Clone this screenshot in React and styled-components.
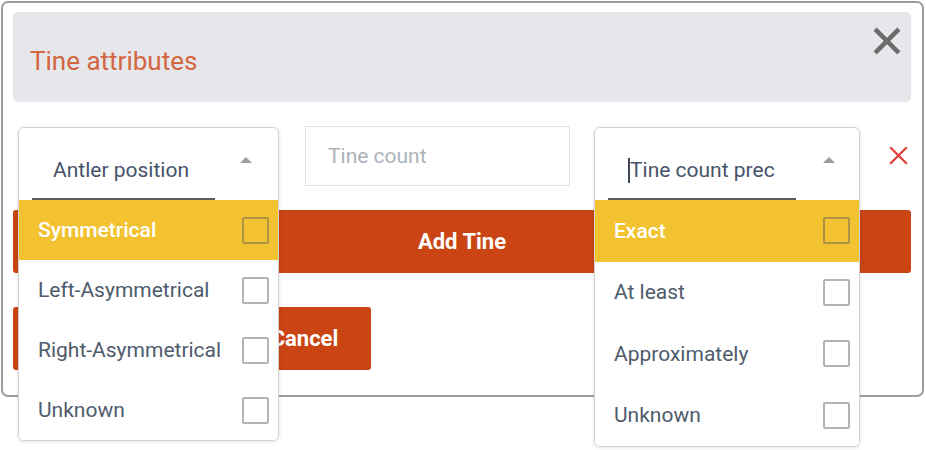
import React from 'react';
import styled, { createGlobalStyle } from 'styled-components';

const GlobalStyle = createGlobalStyle`
    html, body {
        margin: 0;
        min-height: 450px;
        background: #fff;
        font-family: Roboto, "Noto Sans", sans-serif;
    }
`;

const antlerOptions = ['Symmetrical', 'Left-Asymmetrical', 'Right-Asymmetrical', 'Unknown'];
const precisionOptions = ['Exact', 'At least', 'Approximately', 'Unknown'];

const CloseIcon = ({ size, stroke, color }) => (
    <svg width={size} height={size} viewBox="0 0 24 24">
        <path d="M2.5 2.5 L21.5 21.5 M21.5 2.5 L2.5 21.5" stroke={color} strokeWidth={stroke} fill="none" />
    </svg>
);

const Dropdown = ({ label, options, width, lineWidth, rowHeight, arrowRight, caret }) => (
    <Field $width={width}>
        <Menu>
            <MenuHead>
                <Search $width={lineWidth}>
                    {caret && <Caret />}
                    {label}
                </Search>
                <Arrow $right={arrowRight} />
            </MenuHead>
            {options.map((option, i) => (
                <Option key={option} $active={i === 0} $height={rowHeight}>
                    {option}
                    <Check $active={i === 0} />
                </Option>
            ))}
        </Menu>
    </Field>
);

const App = () => {
    return (
        <Page>
            <GlobalStyle />
            <Modal>
                <Header>
                    <Title>Tine attributes</Title>
                    <CloseButton>
                        <CloseIcon size={30} stroke={3.6} color="#6b6b6b" />
                    </CloseButton>
                </Header>
                <Row>
                    <Dropdown
                        label="Antler position"
                        options={antlerOptions}
                        width={261}
                        lineWidth={183}
                        rowHeight={60}
                        arrowRight={26}
                    />
                    <Input placeholder="Tine count" />
                    <Dropdown
                        label="Tine count prec"
                        options={precisionOptions}
                        width={266}
                        lineWidth={188}
                        rowHeight={61.5}
                        arrowRight={24}
                        caret
                    />
                    <RemoveButton>
                        <CloseIcon size={21} stroke={2.6} color="#e0403a" />
                    </RemoveButton>
                </Row>
                <Action $full>Add Tine</Action>
                <Actions>
                    <Action $width={216} aria-label="Save" />
                    <Action $width={133}>Cancel</Action>
                </Actions>
            </Modal>
        </Page>
    );
};

const Page = styled.div`
    min-height: 450px;
`;

const Modal = styled.div`
    margin: 1px;
    width: 923px;
    box-sizing: border-box;
    border: 2px solid #9c9c9c;
    border-radius: 7px;
    padding: 9px 11px 25px 10px;
    display: flex;
    flex-direction: column;
`;

const Header = styled.div`
    height: 90px;
    background-color: #e6e7ea;
    border-radius: 5px;
    display: flex;
    justify-content: space-between;
    align-items: flex-start;
    padding: 0 9px 0 17px;
`;

const Title = styled.h2`
    margin: 34px 0 0;
    font-size: 26px;
    font-weight: 400;
    line-height: 30px;
    color: #d3653f;
`;

const CloseButton = styled.span`
    display: flex;
    margin-top: 14px;
`;

const Row = styled.div`
    margin-top: 24px;
    height: 60px;
    display: flex;
    align-items: center;
    padding-left: 5px;
    gap: 24px;
    position: relative;
    z-index: 2;
`;

const Field = styled.div`
    position: relative;
    width: ${p => p.$width}px;
    height: 58px;
    align-self: flex-start;
    margin-top: 1px;
`;

const Menu = styled.div`
    position: absolute;
    top: 0;
    left: 0;
    right: 0;
    background: #fff;
    border: 1px solid #d2d2d2;
    border-radius: 6px;
    box-shadow: 0 1px 4px rgba(0, 0, 0, .12);
    overflow: hidden;
`;

const MenuHead = styled.div`
    height: 72px;
    display: flex;
    align-items: flex-start;
    padding-left: 13px;
`;

const Search = styled.div`
    width: ${p => p.$width}px;
    height: 72px;
    box-sizing: border-box;
    border-bottom: 2px solid #5c5c5c;
    display: flex;
    align-items: flex-end;
    padding: 0 0 16px 21px;
    font-size: 21px;
    line-height: 24px;
    color: #46536a;
`;

const Caret = styled.span`
    display: inline-block;
    width: 2px;
    height: 25px;
    margin: 0 0 -1px -1px;
    background: #3c4654;
`;

const Arrow = styled.span`
    margin: 29px ${p => p.$right}px 0 auto;
    width: 0;
    height: 0;
    border-left: 6px solid transparent;
    border-right: 6px solid transparent;
    border-bottom: 6px solid #9e9e9e;
`;

const Option = styled.div`
    height: ${p => p.$height}px;
    display: flex;
    justify-content: space-between;
    align-items: center;
    padding: 0 9px 0 19px;
    font-size: 21px;
    font-weight: ${p => (p.$active ? 500 : 400)};
    color: ${p => (p.$active ? '#fff' : '#4e5b6c')};
    background: ${p => (p.$active ? '#f2c230' : '#fff')};
`;

const Check = styled.span`
    width: 27px;
    height: 27px;
    box-sizing: border-box;
    border: 2px solid ${p => (p.$active ? 'rgba(90, 90, 90, .45)' : '#b4b4b4')};
    border-radius: 2px;
`;

const Input = styled.input`
    width: 265px;
    height: 60px;
    margin-left: 2px;
    box-sizing: border-box;
    border: 1px solid #e2e2e2;
    padding: 0 22px;
    font-family: Roboto, sans-serif;
    font-size: 21px;
    outline: none;

    &::placeholder {
        color: #acb2ba;
    }
`;

const RemoveButton = styled.span`
    display: flex;
    margin-left: 4px;
    margin-top: -2px;
`;

const Actions = styled.div`
    margin-top: 34px;
    display: flex;
    gap: 9px;
`;

const Action = styled.button`
    margin-top: ${p => (p.$full ? '24px' : '0')};
    width: ${p => (p.$full ? '100%' : `${p.$width}px`)};
    height: 63px;
    border: none;
    border-radius: 3px;
    background-color: #ca4414;
    color: #fff;
    font-family: Roboto, sans-serif;
    font-size: 22px;
    font-weight: 700;
    cursor: pointer;
`;

export default App;
